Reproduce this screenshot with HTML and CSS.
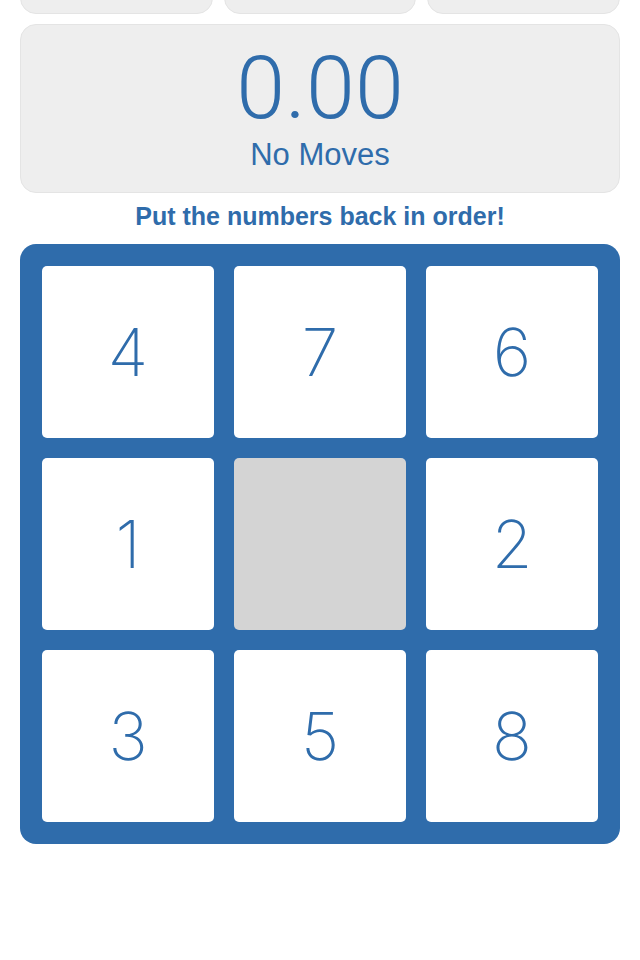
FILE: index.html
```html
<!DOCTYPE html>
<html>
<head>
<meta charset="utf-8">
<link rel="stylesheet" href="styles.css">
</head>
<body>
<div class="page">
  <div class="buttons">
    <div class="btn"></div>
    <div class="btn"></div>
    <div class="btn"></div>
  </div>
  <div class="score">
    <div class="time">0.00</div>
    <div class="moves">No Moves</div>
  </div>
  <div class="instruction">Put the numbers back in order!</div>
  <div class="board">
    <div class="tile">4</div>
    <div class="tile">7</div>
    <div class="tile">6</div>
    <div class="tile">1</div>
    <div class="tile empty"></div>
    <div class="tile">2</div>
    <div class="tile">3</div>
    <div class="tile">5</div>
    <div class="tile">8</div>
  </div>
</div>
</body>
</html>
```
FILE: styles.css
```css
html, body {
  margin: 0;
  padding: 0;
  background: #ffffff;
  overflow: hidden;
}
.page {
  width: 600px;
  padding: 0 20px;
  color: #2f6cab;
  font-family: "Liberation Sans", Arial, sans-serif;
}
.buttons {
  display: flex;
  gap: 11px;
  margin-top: -36px;
}
.btn {
  flex: 1;
  height: 48px;
  background: #eeeeee;
  border: 1px solid #e4e4e4;
  border-radius: 16px;
}
.score {
  box-sizing: border-box;
  margin-top: 10px;
  height: 169px;
  background: #eeeeee;
  border: 1px solid #e4e4e4;
  border-radius: 16px;
  display: flex;
  flex-direction: column;
  align-items: center;
}
.time {
  font-family: "Roboto", "Liberation Sans", sans-serif;
  font-weight: 300;
  font-size: 88px;
  line-height: 88px;
  margin-top: 19px;
}
.moves {
  font-family: "Liberation Sans", Arial, sans-serif;
  font-size: 31px;
  line-height: 36px;
  margin-top: 5px;
}
.instruction {
  text-align: center;
  font-weight: bold;
  font-size: 25px;
  line-height: 28px;
  margin-top: 9px;
}
.board {
  box-sizing: border-box;
  margin-top: 14px;
  width: 600px;
  height: 600px;
  padding: 22px;
  background: #2f6cab;
  border-radius: 16px;
  display: grid;
  grid-template-columns: repeat(3, 172px);
  grid-template-rows: repeat(3, 172px);
  gap: 20px;
}
.tile {
  background: #ffffff;
  border-radius: 5px;
  display: flex;
  align-items: center;
  justify-content: center;
  font-family: "Inter", "Roboto", sans-serif;
  font-weight: 150;
  font-size: 66px;
  color: #2f6cab;
}
.tile.empty {
  background: #d4d4d4;
}
```
